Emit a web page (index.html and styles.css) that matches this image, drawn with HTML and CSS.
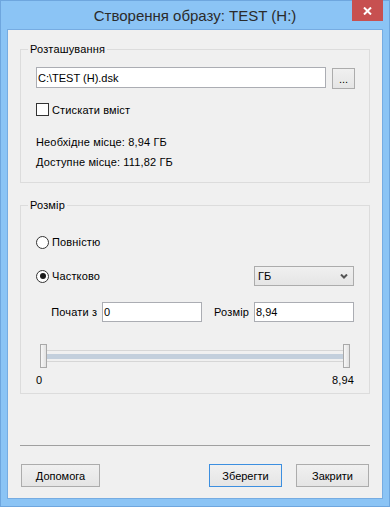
FILE: index.html
```html
<!DOCTYPE html>
<html>
  <head>
    <meta charset="utf-8">
    <title>Створення образу</title>
    <link rel="stylesheet" href="styles.css">
  </head>
  <body>
    <div class="window">
      <div class="titlebar">
        <span></span>
        <div class="title">Створення образу: TEST (H:)</div>
        <button class="close">
          <svg width="9" height="8" viewBox="0 0 9 8">
            <path d="M1 0.5 L8 7.5 M8 0.5 L1 7.5" stroke="#fff" stroke-width="2"/>
          </svg>
        </button>
      </div>

      <div class="client">
        <fieldset class="group location">
          <legend>Розташування</legend>
          <div class="pathRow">
            <input class="field pathField" value="C:\TEST (H).dsk">
            <button class="btn browse">...</button>
          </div>
          <label class="checkRow">
            <span class="checkbox"></span>
            Стискати вміст
          </label>
          <p class="info first">Необхідне місце: 8,94 ГБ</p>
          <p class="info">Доступне місце: 111,82 ГБ</p>
        </fieldset>

        <fieldset class="group size">
          <legend>Розмір</legend>
          <label class="radioRow full">
            <span class="radio"></span>
            Повністю
          </label>
          <div class="partRow">
            <label class="radioRow">
              <span class="radio checked"></span>
              Частково
            </label>
            <div class="select">
              <span>ГБ</span>
              <svg width="8" height="5" viewBox="0 0 8 5">
                <path d="M1 0.5 L4 3.5 L7 0.5" fill="none" stroke="#555" stroke-width="2"/>
              </svg>
            </div>
          </div>
          <div class="rangeRow">
            <span class="fieldLabel">Почати з</span>
            <input class="field small startField" value="0">
            <span class="fieldLabel">Розмір</span>
            <input class="field small" value="8,94">
          </div>
          <div class="slider">
            <span class="thumb"></span>
            <span class="track"><span class="fill"></span></span>
            <span class="thumb"></span>
          </div>
          <div class="scale">
            <span>0</span>
            <span>8,94</span>
          </div>
        </fieldset>

        <div class="separator"></div>

        <div class="buttons">
          <button class="btn help">Допомога</button>
          <span class="spacer"></span>
          <button class="btn default">Зберегти</button>
          <button class="btn">Закрити</button>
        </div>
      </div>
    </div>
  </body>
</html>
```

FILE: styles.css
```css
*{
  box-sizing: border-box;
}

body{
  margin: 0;
  font: 11px/14px "Liberation Sans", Arial, sans-serif;
  letter-spacing: 0.15px;
  color: #000;
}

.window{
  width: 390px;
  height: 507px;
  border: 1px solid #6ea6de;
  background: #8bc4f5;
  padding: 0 6px 7px;
  display: flex;
  flex-direction: column;
}

.titlebar{
  height: 28px;
  display: grid;
  grid-template-columns: 1fr auto 1fr;
  align-items: start;
}

.title{
  font-size: 15px;
  line-height: 26px;
  padding-top: 2px;
  letter-spacing: 0;
  color: #2b2b2b;
  white-space: nowrap;
}

.close{
  justify-self: end;
  width: 31px;
  height: 21px;
  margin-top: -1px;
  border: 0;
  padding: 0;
  background: #c75050;
  display: flex;
  align-items: center;
  justify-content: center;
}

.client{
  flex: 1;
  background: #f0f0f0;
  border: 1px solid #76ace2;
  padding: 0 12px;
  display: flex;
  flex-direction: column;
}

/* group boxes */
.group{
  margin: 13px 0 0;
  padding: 0 15px 13px;
  border: 1px solid #dcdcdc;
  min-width: 0;
}

.group legend{
  padding: 0 2px;
  margin-left: -8px;
  line-height: 13px;
}

.size{
  margin-top: 16px;
  padding-bottom: 6px;
}

.field{
  height: 20px;
  border: 1px solid #abadb3;
  background: #fff;
  font: inherit;
  padding: 0 1px;
  color: #000;
  outline: none;
}

.btn{
  height: 23px;
  border: 1px solid #acacac;
  background: linear-gradient(#f0f0f0, #e5e5e5);
  font: inherit;
  color: #000;
  padding: 0;
}

.pathRow{
  display: flex;
  gap: 6px;
  margin-top: 11px;
}

.pathField{
  flex: 1;
  height: 21px;
  min-width: 0;
}

.browse{
  width: 23px;
  height: 21px;
  margin-top: 1px;
  margin-right: -1px;
  line-height: 14px;
}

.checkRow{
  display: flex;
  align-items: center;
  gap: 3px;
  height: 13px;
  margin-top: 14px;
}

.checkbox{
  width: 13px;
  height: 13px;
  border: 1px solid #333;
  background: #fff;
}

.info{
  margin: 6px 0 0;
}

.info.first{
  margin-top: 19px;
}

/* size group */
.radioRow{
  display: flex;
  align-items: center;
  gap: 3px;
  height: 14px;
}

.radioRow.full{
  margin-top: 23px;
}

.radio{
  width: 13px;
  height: 13px;
  border: 1px solid #333;
  border-radius: 50%;
  background: #fff;
  display: flex;
  align-items: center;
  justify-content: center;
}

.radio.checked::after{
  content: "";
  width: 6px;
  height: 6px;
  border-radius: 50%;
  background: #1a1a1a;
}

.partRow{
  display: flex;
  align-items: center;
  justify-content: space-between;
  height: 20px;
  margin-top: 17px;
}

.select{
  width: 100px;
  height: 20px;
  border: 1px solid #acacac;
  background: linear-gradient(#f0f0f0, #e5e5e5);
  display: flex;
  align-items: center;
  justify-content: space-between;
  padding: 0 5px 0 3px;
}

.rangeRow{
  display: flex;
  align-items: center;
  justify-content: flex-end;
  height: 20px;
  margin-top: 16px;
}

.fieldLabel{
  margin-right: 5px;
}

.small{
  width: 100px;
}

.startField{
  margin-right: 12px;
}

.slider{
  display: flex;
  align-items: center;
  height: 24px;
  margin: 22px 4px 0;
}

.thumb{
  width: 7px;
  height: 24px;
  border: 1px solid #a9a9a9;
  background: linear-gradient(90deg, #f7f7f7, #e2e2e2);
}

.track{
  flex: 1;
  height: 12px;
  border-top: 1px solid #d6d6d6;
  border-bottom: 1px solid #d6d6d6;
  display: flex;
  align-items: center;
}

.fill{
  flex: 1;
  height: 5px;
  background: #c3cfdc;
}

.scale{
  display: flex;
  justify-content: space-between;
  margin-top: 5px;
}

.separator{
  margin-top: 51px;
  border-top: 1px solid #a0a0a0;
}

.buttons{
  display: flex;
  gap: 14px;
  margin-top: 18px;
  padding: 0 1px;
}

.buttons .btn{
  width: 73px;
}

.buttons .help{
  width: 79px;
}

.spacer{
  flex: 1;
}

.default{
  border-color: #3c8fe0;
}
```
